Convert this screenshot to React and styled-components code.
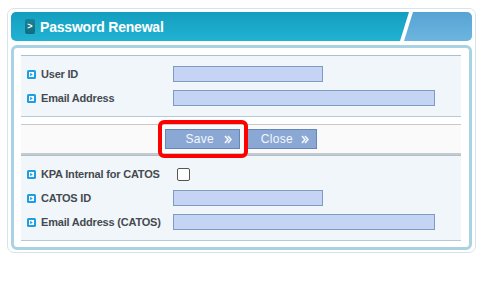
import React from 'react';
import styled, { createGlobalStyle } from 'styled-components';

const GlobalStyle = createGlobalStyle`
  body {
    margin: 0;
    background: #ffffff;
    font-family: "Liberation Sans", Arial, sans-serif;
  }
`;

const Card = styled.div`
  margin: 8px 0 0 7px;
  width: 469px;
  box-sizing: border-box;
  border: 1px solid #d6e4ec;
  border-radius: 7px;
  padding: 3px 3px 2px 3px;
  background: #fff;
`;

const Header = styled.div`
  display: flex;
  height: 29px;
`;

const TitleBar = styled.div`
  width: 398px;
  flex: none;
  display: flex;
  align-items: center;
  gap: 5px;
  padding-left: 14px;
  box-sizing: border-box;
  border-radius: 5px 0 0 5px;
  background: linear-gradient(#139ebf, #22b2d3);
  clip-path: polygon(0 0, 100% 0, calc(100% - 9px) 100%, 0 100%);
`;

const TitleIcon = styled.span`
  width: 10px;
  height: 15px;
  border-radius: 2px;
  background: linear-gradient(#1a8497, #0f6c7e);
  color: #fff;
  font-size: 9px;
  font-weight: bold;
  line-height: 15px;
  text-align: center;
`;

const Title = styled.span`
  color: #fff;
  font-size: 14px;
  font-weight: bold;
  letter-spacing: -0.2px;
`;

const Tab = styled.div`
  width: 68px;
  flex: none;
  margin-left: -5px;
  border-radius: 0 5px 5px 0;
  background: linear-gradient(#57a3d3, #6cb5df);
  clip-path: polygon(9px 0, 100% 0, 100% 100%, 0 100%);
`;

const Frame = styled.div`
  margin-top: 4px;
  border: 3px solid #a9d2e3;
  border-radius: 6px;
  padding: 7px 8px 6px 7px;
  background: #fff;
`;

const Section = styled.div`
  display: grid;
  grid-template-columns: 146px 1fr;
  row-gap: 8px;
  align-items: center;
  padding: 10px 0 10px 6px;
  background: #f1f6fb;
  border-top: 1px solid #a7c2d5;
  border-bottom: 1px solid #b5c9d8;
`;

const Label = styled.div`
  display: flex;
  align-items: center;
  gap: 5px;
  height: 16px;
  color: #454a50;
  font-size: 11px;
  font-weight: bold;
  letter-spacing: -0.2px;
  white-space: nowrap;
`;

const TextBox = styled.div`
  width: ${(p) => p.$w}px;
  height: 16px;
  box-sizing: border-box;
  background: #c5d4f4;
  border: 1px solid #7f9cc0;
`;

const Check = styled.div`
  width: 13px;
  height: 13px;
  margin-left: 4px;
  box-sizing: border-box;
  border: 1px solid #555;
  border-radius: 2px;
  background: #fff;
`;

const ButtonBar = styled.div`
  margin-top: 7px;
  height: 28px;
  display: flex;
  justify-content: center;
  align-items: center;
  gap: 7px;
  background: #fafafa;
  border-top: 1px solid #c9c9c9;
  border-bottom: 2px solid #c9c9c9;
`;

const Highlight = styled.div`
  position: relative;
  display: flex;
  &::after {
    content: '';
    position: absolute;
    inset: -9px -8px -9px -7px;
    border: 4px solid #ff0000;
    border-radius: 6px;
    pointer-events: none;
  }
`;

const Button = styled.button`
  width: ${(p) => p.$w}px;
  height: 20px;
  box-sizing: border-box;
  display: flex;
  justify-content: flex-end;
  align-items: center;
  gap: ${(p) => p.$gap}px;
  padding: 0 7px 0 0;
  margin: 0;
  background: #8ba8d4;
  border: 1px solid #6386bd;
  color: #f4f7fc;
  font-family: "Liberation Sans", Arial, sans-serif;
  font-size: 12px;
  letter-spacing: 0.3px;
  cursor: pointer;
`;

const Arrows = () => (
  <svg width="8" height="9" viewBox="0 0 8 9">
    <path d="M1 1 L4 4.5 L1 8 M4 1 L7 4.5 L4 8" fill="none" stroke="#f4f7fc" strokeWidth="1.6" />
  </svg>
);

const Bullet = () => (
  <svg width="9" height="9" viewBox="0 0 9 9">
    <rect x="0" y="0" width="9" height="9" rx="1.5" fill="#1c9fe2" />
    <rect x="2" y="2" width="5" height="5" fill="#ffffff" />
    <path d="M3.2 2.8 L5.8 4.5 L3.2 6.2 Z" fill="#1c9fe2" />
  </svg>
);

const Field = ({ label, children }) => (
  <>
    <Label>
      <Bullet />
      {label}
    </Label>
    <div>{children}</div>
  </>
);

export default function App() {
  return (
    <>
      <GlobalStyle />
      <Card>
        <Header>
          <TitleBar>
            <TitleIcon>&gt;</TitleIcon>
            <Title>Password Renewal</Title>
          </TitleBar>
          <Tab />
        </Header>
        <Frame>
          <Section>
            <Field label="User ID">
              <TextBox $w={150} />
            </Field>
            <Field label="Email Address">
              <TextBox $w={262} />
            </Field>
          </Section>
          <ButtonBar>
            <Highlight>
              <Button $w={75} $gap={10}>
                Save <Arrows />
              </Button>
            </Highlight>
            <Button $w={70} $gap={8}>
              Close <Arrows />
            </Button>
          </ButtonBar>
          <Section>
            <Field label="KPA Internal for CATOS">
              <Check />
            </Field>
            <Field label="CATOS ID">
              <TextBox $w={150} />
            </Field>
            <Field label="Email Address (CATOS)">
              <TextBox $w={262} />
            </Field>
          </Section>
        </Frame>
      </Card>
    </>
  );
}
